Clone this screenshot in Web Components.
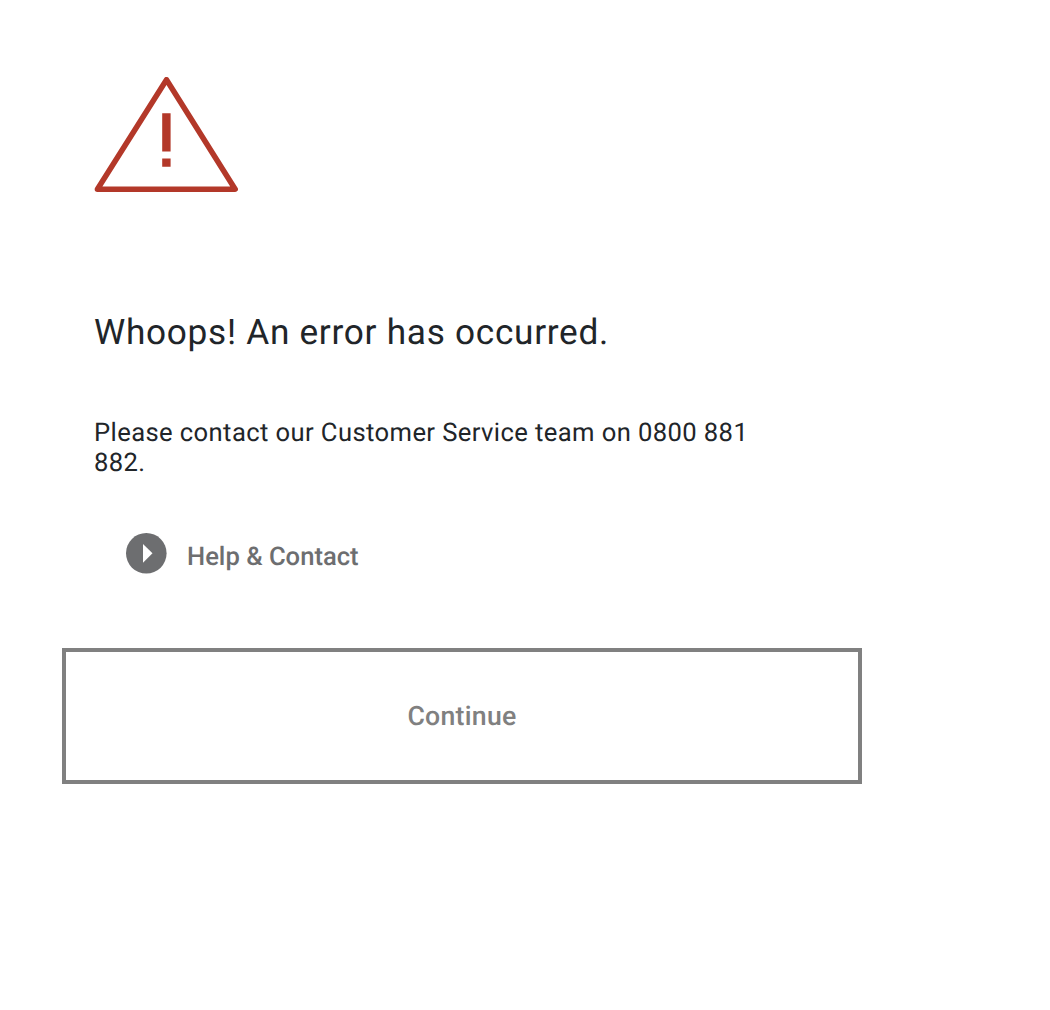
<!DOCTYPE html>
<html lang="en">
<head>
<meta charset="utf-8">
<title>Error</title>
<style>
body { margin: 0; background: #fff; font-family: Roboto, "Liberation Sans", sans-serif; color: #212529; text-rendering: geometricPrecision; }
</style>
</head>
<body>
<error-page>
  <warning-icon slot="icon"></warning-icon>
  <span slot="title">Whoops! An error has occurred.</span>
  <span slot="message">Please contact our Customer Service team on 0800 881 882.</span>
  <help-link slot="help">Help &amp; Contact</help-link>
  <outline-button slot="action">Continue</outline-button>
</error-page>
<script>
class WarningIcon extends HTMLElement {
  constructor() {
    super();
    this.attachShadow({ mode: 'open' }).innerHTML = `
      <style>:host { display: block; width: 144px; height: 116px; } svg { display: block; }</style>
      <svg width="144" height="116" viewBox="0 0 144 116" aria-hidden="true">
        <path d="M72.5 2.7 L141.2 112.2 H3.4 Z" fill="none" stroke="#b33829" stroke-width="5.5" stroke-linejoin="round"/>
        <path d="M68.2 36.2h8.4v38.4h-8.4zM68.2 81.5h8.4v8.3h-8.4z" fill="#b33829"/>
      </svg>`;
  }
}
class HelpLink extends HTMLElement {
  constructor() {
    super();
    this.attachShadow({ mode: 'open' }).innerHTML = `
      <style>
        :host { display: flex; align-items: flex-start; gap: 20px; color: #6d6e70; font-size: 25.6px; font-weight: 500; line-height: 30px; letter-spacing: 0; }
        svg { display: block; flex: none; }
        span { padding-top: 9px; white-space: nowrap; }
      </style>
      <svg width="41" height="41" viewBox="0 0 41 41" aria-hidden="true">
        <circle cx="20.3" cy="20.3" r="20.3" fill="#6d6e70"/>
        <path d="M17 11v18.7l9.5-9.35z" fill="#fff"/>
      </svg>
      <span><slot></slot></span>`;
  }
}
class OutlineButton extends HTMLElement {
  constructor() {
    super();
    this.attachShadow({ mode: 'open' }).innerHTML = `
      <style>
        :host { display: block; }
        button { display: flex; align-items: center; justify-content: center; box-sizing: border-box; width: 800px; height: 136px; margin: 0; padding: 0; border: 4px solid #808080; background: #fff; color: #808080; font: 500 26.667px/32px Roboto, sans-serif; letter-spacing: 0.27px; text-rendering: inherit; }
      </style>
      <button type="button"><slot></slot></button>`;
  }
}
class ErrorPage extends HTMLElement {
  constructor() {
    super();
    this.attachShadow({ mode: 'open' }).innerHTML = `
      <style>
        :host { display: flex; flex-direction: column; box-sizing: border-box; width: 1050px; height: 1010px; padding: 77px 0 0 62px; }
        section { padding-left: 32px; width: 690px; }
        h1 { margin: 118px 0 0; font-size: 35.2px; font-weight: 400; line-height: 42px; letter-spacing: 0.72px; white-space: nowrap; }
        p { width: 680px; margin: 65px 0 0; font-size: 25.6px; line-height: 30px; letter-spacing: 0.4px; }
        .help { padding: 55px 0 0 32px; }
        .action { padding-top: 74px; }
      </style>
      <section>
        <slot name="icon"></slot>
        <h1><slot name="title"></slot></h1>
        <p><slot name="message"></slot></p>
        <div class="help"><slot name="help"></slot></div>
      </section>
      <div class="action"><slot name="action"></slot></div>`;
  }
}
customElements.define('warning-icon', WarningIcon);
customElements.define('help-link', HelpLink);
customElements.define('outline-button', OutlineButton);
customElements.define('error-page', ErrorPage);
</script>
</body>
</html>
